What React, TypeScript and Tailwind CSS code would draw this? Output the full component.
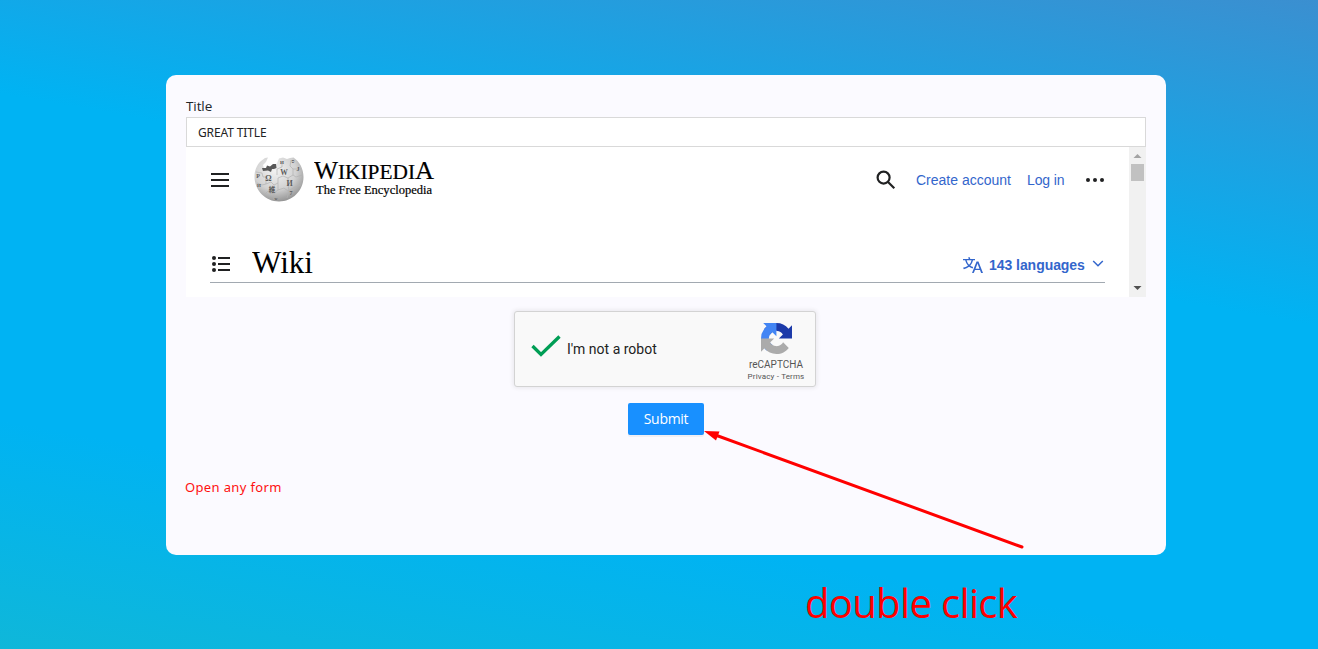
import React from "react";

function Globe() {
  return (
    <svg width="50" height="50" viewBox="0 0 50 50" className="shrink-0">
      <defs>
        <radialGradient id="ball" cx="0.42" cy="0.3" r="0.78">
          <stop offset="0" stopColor="#f2f2f2" />
          <stop offset="0.55" stopColor="#d2d2d2" />
          <stop offset="1" stopColor="#858585" />
        </radialGradient>
      </defs>
      <path d="M7 6C2.500 10 0.500 16 0.500 21.500C0.500 35.500 11.500 46.500 25 46.500C38.500 46.500 49.500 35.500 49.500 22C49.500 13.500 45.500 6.500 39.500 2.500L36 3L33 4L29 2.500L25 3.500L23 8L21 11L17 12L10 13L9 10L12 7L14 2.500L11 3Z" fill="url(#ball)" />
      <path d="M8 13L12 13L13 10.500L16 11.500L19 9L22 9L22.500 13L20 14L18 14L17 17L14 15.500L9 16Z" fill="#585858" />
      <g fill="none" stroke="#b2b2b2" strokeWidth="0.7">
        <path d="M2 17L8 18L9 22L12 22L12 29L8 30L3 28M12 29L17 27L20 30L24 28L24 23L29 21L34 23L39 20L42 22L48 20M24 28L24 35L20 38L14 36L11 39M24 35L30 33L34 36L41 32L47 30M34 23L34 29L35 36L33 43M23 14L28 12L28 7M39 20L39 14L36 11L37 5M20 38L20 45M39 14L47 14M23 14L23 20" />
      </g>
      <g fill="#5c5c5c" fontFamily="Liberation Serif, serif" fontWeight="bold" textAnchor="middle">
        <text x="14.500" y="26" fontSize="8">Ω</text>
        <text x="30" y="19.500" fontSize="7.500">W</text>
        <text x="35.500" y="30.500" fontSize="8">И</text>
        <text x="18" y="37" fontSize="6.500" fontFamily="Noto Sans CJK JP, sans-serif">維</text>
        <text x="37" y="40" fontSize="6">7</text>
        <text x="44" y="16" fontSize="6">J</text>
        <text x="4" y="23" fontSize="6">P</text>
        <text x="28" y="9" fontSize="5">И</text>
        <text x="39" y="8" fontSize="5">ס</text>
        <text x="5" y="32" fontSize="5">И</text>
        <text x="22" y="45" fontSize="4">w</text>
      </g>
    </svg>
  );
}

function WikiFrame() {
  return (
    <div className="flex h-[150px] bg-white">
      <div className="flex min-w-0 flex-1 flex-col pl-6 pr-6">
        <div className="flex h-[66px] items-center">
          <svg width="20" height="20" viewBox="0 0 20 20" fill="#202122" className="shrink-0">
            <path d="M1 3h18v2H1zM1 9h18v2H1zM1 15h18v2H1z" />
          </svg>
          <div className="ml-[24px] flex h-[50px] items-start">
            <Globe />
            <svg width="122" height="46" viewBox="0 0 122 46" className="ml-[10px]" fill="#000" fontFamily="Liberation Serif, serif">
              <text x="0" y="24" fontSize="26" textLength="24" lengthAdjust="spacingAndGlyphs" stroke="#000" strokeWidth="0.2">W</text>
              <text x="24" y="24" fontSize="20" textLength="77" lengthAdjust="spacingAndGlyphs" stroke="#000" strokeWidth="0.2">IKIPEDI</text>
              <text x="101" y="24" fontSize="26" textLength="19" lengthAdjust="spacingAndGlyphs" stroke="#000" strokeWidth="0.2">A</text>
              <text x="2" y="38.500" fontSize="12.500" textLength="116" lengthAdjust="spacingAndGlyphs" stroke="#000" strokeWidth="0.2">The Free Encyclopedia</text>
            </svg>
          </div>
          <div className="ml-auto flex items-center font-['Liberation_Sans',sans-serif] text-sm text-[#3366cc]">
            <svg width="20" height="20" viewBox="0 0 20 20" fill="none" stroke="#202122" strokeWidth="2.2" className="mr-5">
              <circle cx="7.600" cy="7.600" r="6" />
              <path d="M12 12L18.300 18.300" />
            </svg>
            <span className="w-[95px] whitespace-nowrap">Create account</span>
            <span className="ml-4 w-[38px] whitespace-nowrap tracking-[-0.100px]">Log in</span>
            <svg width="20" height="20" viewBox="0 0 20 20" fill="#202122" className="ml-5">
              <circle cx="3" cy="10" r="2" />
              <circle cx="10" cy="10" r="2" />
              <circle cx="17" cy="10" r="2" />
            </svg>
          </div>
        </div>
        <div className="mt-[28px] flex h-[42px] items-center border-b border-[#a2a9b1] pt-[5px]">
          <svg width="20" height="20" viewBox="0 0 20 20" fill="#202122" className="ml-px shrink-0">
            <circle cx="3" cy="4" r="2" />
            <circle cx="3" cy="10" r="2" />
            <circle cx="3" cy="16" r="2" />
            <path d="M7 3h12v2H7zM7 9h12v2H7zM7 15h12v2H7z" />
          </svg>
          <svg width="64" height="36" viewBox="0 0 64 36" className="ml-[21px]" fill="#000" fontFamily="Liberation Serif, serif">
            <text x="0" y="27" fontSize="31.500" textLength="61" lengthAdjust="spacingAndGlyphs">Wiki</text>
          </svg>
          <div className="ml-auto flex items-center pt-px font-['Liberation_Sans',sans-serif] text-sm font-bold text-[#3366cc]">
            <svg width="20" height="20" viewBox="0 0 20 20" fill="#3366cc" className="mr-1.5">
              <path d="M20 18h-1.440a.61.61 0 0 1-.4-.12.810.81 0 0 1-.23-.31L17 15h-5l-1 2.540a.770.77 0 0 1-.22.3.590.59 0 0 1-.4.140H9l4.550-11.470h1.890zm-3.530-4.310L14.890 9.500a11.620 11.620 0 0 1-.39-1.240q-.09.37-.19.690l-.19.560-1.580 4.190zm-6.300-1.580a13.430 13.430 0 0 1-2.910-1.410 11.460 11.460 0 0 0 2.810-5.370H12V4H7.310a4 4 0 0 0-.2-.560C6.870 2.790 6.600 2 6.600 2l-1.470.5s.4.890.6 1.500H0v1.330h2.150A11.230 11.230 0 0 0 5 10.700a17.190 17.190 0 0 1-5 2.100q.56.820.87 1.380a23.280 23.280 0 0 0 5.220-2.510 15.640 15.640 0 0 0 3.560 1.770zM3.630 5.330h4.910a8.110 8.110 0 0 1-2.450 4.450 9.110 9.110 0 0 1-2.460-4.450z" />
            </svg>
            <span className="w-[96px] whitespace-nowrap tracking-[-0.050px]">143 languages</span>
            <svg width="12" height="12" viewBox="0 0 12 12" fill="none" stroke="#3366cc" strokeWidth="1.500" className="mb-0.5 ml-[7px] mr-px">
              <path d="M1.200 3l4.800 4.800L10.800 3" />
            </svg>
          </div>
        </div>
      </div>
      <div className="flex w-[17px] flex-col items-center justify-between bg-[#f1f1f1]">
        <div className="flex flex-col items-center">
          <svg width="17" height="17" viewBox="0 0 17 17" fill="#a3a3a3"><path d="M4.500 11L8.500 7L12.500 11z" /></svg>
          <div className="h-[17px] w-[13px] bg-[#c1c1c1]" />
        </div>
        <svg width="17" height="17" viewBox="0 0 17 17" fill="#505050"><path d="M4.500 6L8.500 10L12.500 6z" /></svg>
      </div>
    </div>
  );
}

function Captcha() {
  return (
    <div className="mr-0.5 mt-[14px] flex h-[76px] w-[302px] self-center rounded-[3px] border border-[#d3d3d3] bg-[#f9f9f9] shadow-[0_0_4px_1px_rgba(0,0,0,0.08)]">
      <svg width="30" height="24" viewBox="0 0 30 24" fill="none" stroke="#009e55" strokeWidth="3.300" className="ml-4 mt-[22px]">
        <path d="M1.500 12L10 20.500L28.500 2.500" />
      </svg>
      <span className="ml-[6px] mt-[27px] h-5 w-[100px] whitespace-nowrap font-[Roboto] text-sm leading-5 text-[#222]">I'm not a robot</span>
      <div className="ml-auto flex w-[78px] flex-col items-center pt-[11px] font-[Roboto] text-[#555]">
        <svg width="31" height="31" viewBox="0 0 64 64">
          <path d="M64 31.950a33 33 0 0 0-.02-1.380V4.600l-7.180 7.180A32 32 0 0 0 32.070 0C21.700 0 12.480 4.930 6.640 12.570l11.770 11.890a15.600 15.600 0 0 1 4.770-5.350c2.060-1.600 4.970-2.910 8.890-2.910.470 0 .840.050 1.110.160a15.560 15.560 0 0 1 12 7.210l-8.330 8.330 27.150.05" fill="#1c3aa9" />
          <path d="M31.860 0a33 33 0 0 0-1.370.02H4.570l7.160 7.200A32 32 0 0 0 0 32.010c0 10.390 4.920 19.640 12.540 25.490l11.860-11.800a15.600 15.600 0 0 1-5.340-4.780c-1.600-2.060-2.900-4.980-2.900-8.910 0-.470.060-.840.160-1.110a15.570 15.570 0 0 1 7.190-12.030l8.310 8.350L31.870 0" fill="#4285f4" />
          <path d="M0 32.010a33 33 0 0 0 .020 1.370v25.980l7.180-7.180A32 32 0 0 0 31.930 63.960c10.370 0 19.590-4.930 25.430-12.570L45.590 39.500a15.600 15.600 0 0 1-4.770 5.350c-2.060 1.600-4.970 2.910-8.890 2.910-.470 0-.840-.050-1.110-.160a15.560 15.560 0 0 1-12-7.210l8.330-8.330L0 32.010" fill="#ababab" />
        </svg>
        <span className="mt-[5px] text-[10px] leading-[12px]">reCAPTCHA</span>
        <span className="mt-px whitespace-nowrap text-[8px] leading-[10px] tracking-[0.150px]">Privacy&nbsp;-&nbsp;Terms</span>
      </div>
    </div>
  );
}

export default function App() {
  return (
    <div className="relative flex h-[649px] w-[1318px] flex-col overflow-hidden bg-[linear-gradient(190deg,#3b8fd0_0%,#00b3f3_37%,#00b3f3_74%,#0fb7d9_100%)] pl-[166px] pt-[75px] font-['Open_Sans',sans-serif]">
      <main className="flex h-[480px] w-[1000px] flex-col rounded-[10px] bg-[#fbfaff] px-5 pt-[21px]">
        <label className="h-[21px] font-['Open_Sans',sans-serif] text-[13.500px] leading-5 tracking-[-0.100px] text-[#212529]">Title</label>
        <div className="h-[30px] border border-[#d9d9d9] bg-white px-[11px] font-['Noto_Sans',sans-serif] text-xs leading-[29px] text-[#222]">
          <span className="tracking-[-0.120px]">GREAT TITLE</span>
        </div>
        <WikiFrame />
        <Captcha />
        <button className="mt-4 h-8 w-[76px] self-center rounded-[2px] bg-[#1890ff] text-sm tracking-[-0.300px] text-white shadow-[0_2px_0_rgba(0,0,0,0.045)]">Submit</button>
        <p className="-ml-px mt-[42px] font-['Noto_Sans',sans-serif] text-[13px] leading-5 tracking-[0.350px] text-[#ff1010]">Open any form</p>
      </main>
      <svg width="330" height="130" viewBox="700 425 330 130" className="pointer-events-none absolute left-[700px] top-[425px]">
        <path d="M1022 547L714 434.500" fill="none" stroke="#f00" strokeWidth="3" strokeLinecap="round" />
        <path d="M704 431L719.500 431.500L716 440.500Z" fill="#f00" />
      </svg>
      <div className="absolute left-[805px] top-[575px] whitespace-nowrap text-[40px] leading-[56px] tracking-[-0.650px] text-[#f00]">double click</div>
    </div>
  );
}
